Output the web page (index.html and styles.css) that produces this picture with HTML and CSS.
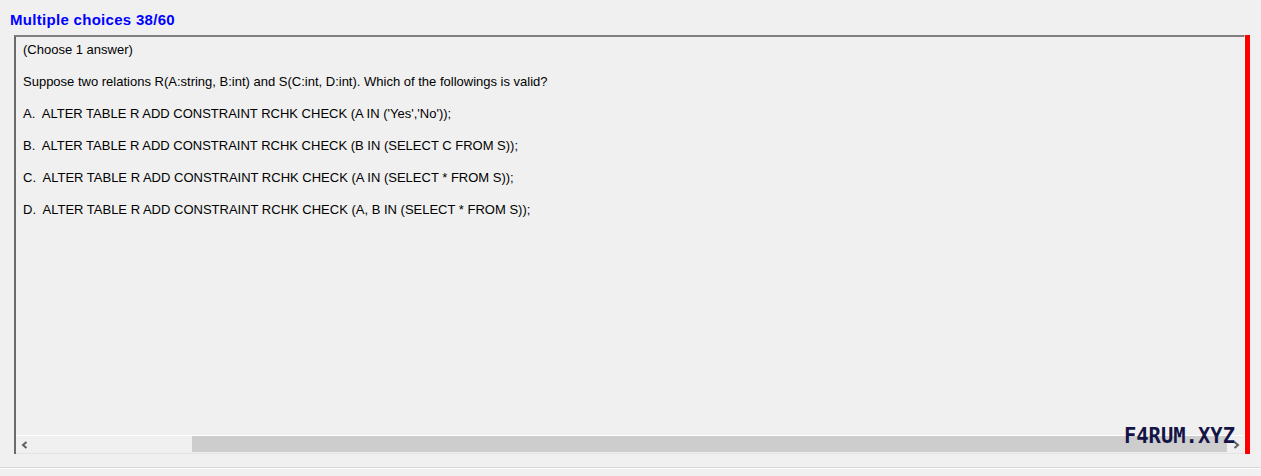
FILE: index.html
```html
<!DOCTYPE html>
<html>
<head>
<meta charset="utf-8">
<link rel="stylesheet" href="styles.css">
</head>
<body>
<div class="page">
  <div class="title">Multiple choices 38/60</div>
  <div class="frame">
    <div class="panel">
      <div class="content">
        <p class="line">(Choose 1 answer)</p>
        <p class="line">Suppose two relations R(A:string, B:int) and S(C:int, D:int). Which of the followings is valid?</p>
        <p class="line">A.&nbsp; ALTER TABLE R ADD CONSTRAINT RCHK CHECK (A IN ('Yes','No'));</p>
        <p class="line">B.&nbsp; ALTER TABLE R ADD CONSTRAINT RCHK CHECK (B IN (SELECT C FROM S));</p>
        <p class="line">C.&nbsp; ALTER TABLE R ADD CONSTRAINT RCHK CHECK (A IN (SELECT * FROM S));</p>
        <p class="line">D.&nbsp; ALTER TABLE R ADD CONSTRAINT RCHK CHECK (A, B IN (SELECT * FROM S));</p>
      </div>
      <div class="hscroll">
        <span class="arrow left"><svg width="8" height="8" viewBox="0 0 8 8"><path d="M5.5 1 L2 4 L5.5 7" fill="none" stroke="#606060" stroke-width="2"/></svg></span>
        <div class="track"><div class="gap"></div><div class="thumb"></div></div>
        <span class="arrow right"><svg width="8" height="8" viewBox="0 0 8 8"><path d="M2.5 1 L6 4 L2.5 7" fill="none" stroke="#606060" stroke-width="2"/></svg></span>
        <span class="watermark">F4RUM.XYZ</span>
      </div>
    </div>
    <div class="redbar"></div>
  </div>
  <div class="footer"></div>
</div>
</body>
</html>
```

FILE: styles.css
```css
html, body {
  margin: 0;
  padding: 0;
  background: #f0f0f0;
}
.page {
  width: 1261px;
  height: 476px;
  overflow: hidden;
  font-family: "Liberation Sans", Arial, sans-serif;
}
.title {
  height: 35px;
  box-sizing: border-box;
  padding: 11px 0 0 10px;
  font-size: 15px;
  font-weight: bold;
  letter-spacing: 0.3px;
  color: #0000ff;
  line-height: 18px;
}
.frame {
  display: flex;
  padding-left: 14px;
  height: 419px;
}
.panel {
  width: 1231px;
  box-sizing: border-box;
  border-left: 2px solid #6b6b6b;
  border-top: 2px solid #7f7f7f;
  border-right: 1px solid #ffffff;
  display: flex;
  flex-direction: column;
  position: relative;
}
.content {
  flex: 1;
  padding: 5px 0 0 7px;
  font-size: 13px;
  color: #000;
}
.line {
  margin: 0 0 17px 0;
  height: 15px;
  line-height: 15px;
  white-space: nowrap;
}
.hscroll {
  height: 17px;
  border-top: 1px solid #ffffff;
  border-bottom: 1px solid #e3e3e3;
  display: flex;
  align-items: stretch;
  position: relative;
}
.arrow {
  width: 17px;
  display: flex;
  align-items: center;
  justify-content: center;
}
.track {
  flex: 1;
  display: flex;
  padding: 0 0 1px 0;
}
.gap {
  width: 159px;
}
.thumb {
  flex: 1;
  background: #cdcdcd;
}
.watermark {
  position: absolute;
  right: 9px;
  top: -12px;
  font-family: "DejaVu Sans Mono", "Liberation Mono", monospace;
  font-weight: bold;
  font-size: 20.5px;
  color: #141446;
  line-height: 24px;
}
.redbar {
  width: 5px;
  height: 419px;
  background: #ff0000;
}
.footer {
  height: 1px;
  margin-top: 13px;
  background: #d8d8d8;
  border-bottom: 1px solid #ffffff;
}
```
